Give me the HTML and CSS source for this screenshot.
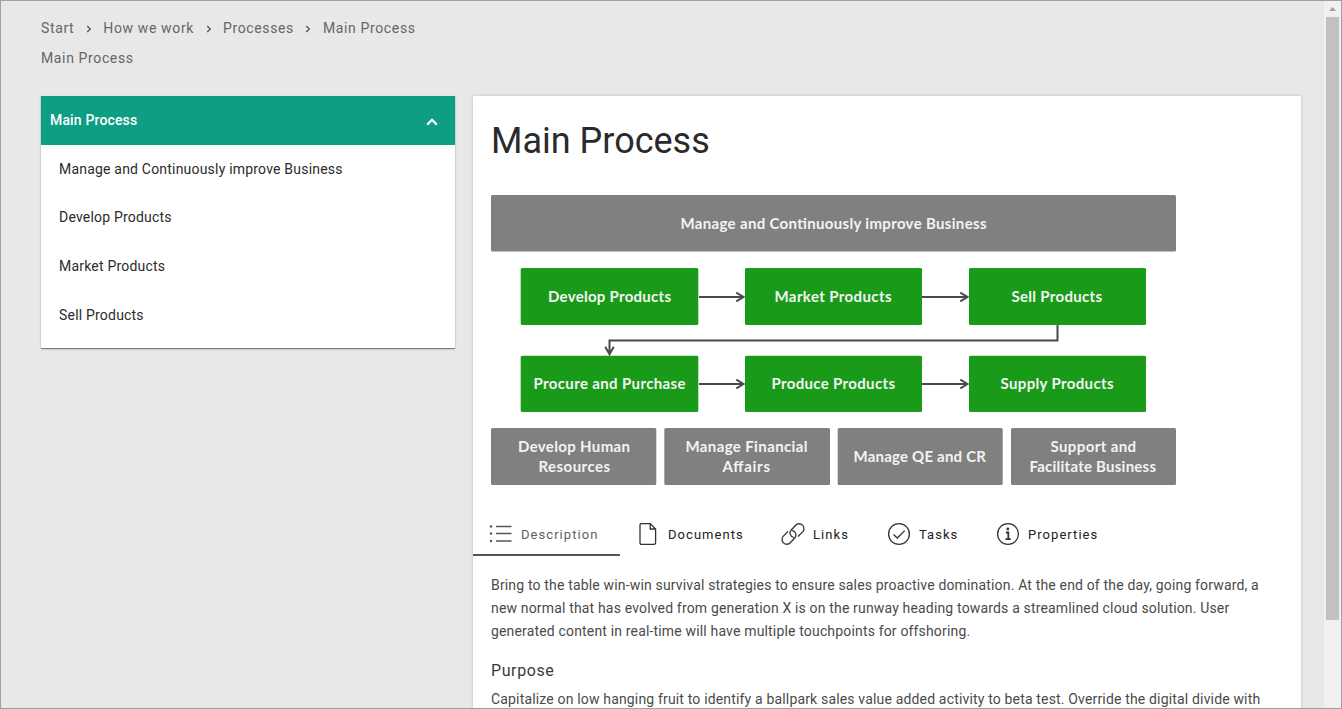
FILE: index.html
```html
<!DOCTYPE html>
<html lang="en">
<head>
<meta charset="utf-8">
<title>Main Process</title>
<link rel="stylesheet" href="styles.css">
</head>
<body>
<div class="window">
  <div class="page">
    <nav class="crumbs">
      <a>Start</a>
      <svg class="sep" viewBox="0 0 6 8"><path d="M1.2 1 4.3 4 1.2 7"/></svg>
      <a>How we work</a>
      <svg class="sep" viewBox="0 0 6 8"><path d="M1.2 1 4.3 4 1.2 7"/></svg>
      <a>Processes</a>
      <svg class="sep" viewBox="0 0 6 8"><path d="M1.2 1 4.3 4 1.2 7"/></svg>
      <a>Main Process</a>
    </nav>
    <div class="current">Main Process</div>
    <div class="columns">
      <aside class="menu">
        <div class="menu-head"><span>Main Process</span>
          <svg class="chevron" viewBox="0 0 12 8"><path d="M1.2 6.6 6 1.8 10.8 6.6"/></svg>
        </div>
        <ul class="menu-list">
          <li>Manage and Continuously improve Business</li>
          <li>Develop Products</li>
          <li>Market Products</li>
          <li>Sell Products</li>
        </ul>
      </aside>
      <main class="card">
        <h1 class="title">Main Process</h1>
        <svg class="diagram" width="686" height="291" viewBox="490 195 686 291">
          <g class="support">
            <rect x="491" y="195" width="685" height="56.5" rx="1.5"/>
            <rect x="491" y="428" width="165.3" height="57" rx="1.5"/>
            <rect x="664.3" y="428" width="165.7" height="57" rx="1.5"/>
            <rect x="837.7" y="428" width="165" height="57" rx="1.5"/>
            <rect x="1011" y="428" width="165" height="57" rx="1.5"/>
          </g>
          <g class="core">
            <rect x="520.7" y="268" width="177.6" height="57" rx="1.5"/>
            <rect x="745" y="268" width="177" height="57" rx="1.5"/>
            <rect x="969" y="268" width="177" height="57" rx="1.5"/>
            <rect x="520.7" y="355.7" width="177.6" height="56.3" rx="1.5"/>
            <rect x="745" y="355.7" width="177" height="56.3" rx="1.5"/>
            <rect x="969" y="355.7" width="177" height="56.3" rx="1.5"/>
          </g>
          <g class="flow">
            <path d="M699 297H743.5M736.3 292.6 743.5 297 736.3 301.4"/>
            <path d="M922 297H967.5M960.3 292.6 967.5 297 960.3 301.4"/>
            <path d="M699 384H743.5M736.3 379.6 743.5 384 736.3 388.4"/>
            <path d="M922 384H967.5M960.3 379.6 967.5 384 960.3 388.4"/>
            <path d="M1057.5 325V340.5H609.5V354M605.2 346.8 609.5 354.2 613.8 346.8"/>
          </g>
          <g class="labels">
            <text x="680.5" y="229" textLength="306">Manage and Continuously improve Business</text>
            <text x="548" y="302" textLength="123">Develop Products</text>
            <text x="774.5" y="302" textLength="117">Market Products</text>
            <text x="1011.5" y="302" textLength="90.5">Sell Products</text>
            <text x="533.5" y="389" textLength="152">Procure and Purchase</text>
            <text x="771.5" y="389" textLength="123.5">Produce Products</text>
            <text x="1000.5" y="389" textLength="113">Supply Products</text>
            <text x="518" y="452" textLength="112">Develop Human</text>
            <text x="538.5" y="472" textLength="71.5">Resources</text>
            <text x="685.5" y="452" textLength="122">Manage Financial</text>
            <text x="722.5" y="472" textLength="47.5">Affairs</text>
            <text x="853.5" y="462" textLength="132.5">Manage QE and CR</text>
            <text x="1050.5" y="452" textLength="85.5">Support and</text>
            <text x="1029.5" y="472" textLength="126.5">Facilitate Business</text>
          </g>
        </svg>
        <div class="tabs">
          <div class="tab active">
            <svg class="icon" viewBox="0 0 24 24"><path d="M7 4.5H22.5M7 11.5H22.5M7 19H22.5"/><g class="dots"><circle cx="2" cy="4.5" r="1.2"/><circle cx="2" cy="11.5" r="1.2"/><circle cx="2" cy="19" r="1.2"/></g></svg>
            <span>Description</span>
          </div>
          <div class="tab documents">
            <svg class="icon" viewBox="0 0 24 24"><path d="M5.3 1.6H14.2L19.6 7V20.8Q19.6 22.4 18 22.4H5.6Q4 22.4 4 20.8V3.2Q4 1.6 5.3 1.6ZM14.2 1.6V7H19.6"/></svg>
            <span>Documents</span>
          </div>
          <div class="tab links">
            <svg class="icon" viewBox="0 0 24 24"><path d="M12.8 15.6C9.2 14.6 7.8 10.6 10.2 8L14.7 3.2A4.8 4.8 0 0 1 21.6 9.9L17 14.5"/><path d="M11.2 8.4C14.8 9.4 16.2 13.4 13.800 16L9.300 20.800A4.800 4.800 0 0 1 2.400 14.100L7 9.500"/></svg>
            <span>Links</span>
          </div>
          <div class="tab tasks">
            <svg class="icon" viewBox="0 0 24 24"><circle cx="12" cy="12" r="10.4"/><path d="M6.5 12.5 10.3 16 17.7 8.6"/></svg>
            <span>Tasks</span>
          </div>
          <div class="tab properties">
            <svg class="icon" viewBox="0 0 24 24"><circle cx="12" cy="12" r="10.4"/><circle class="dot" cx="11.8" cy="7" r="1.4"/><path class="stem" d="M9.8 10.5H12.3V17M9.5 17.2H14.7"/></svg>
            <span>Properties</span>
          </div>
        </div>
        <div class="content">
          <p>Bring to the table win-win survival strategies to ensure sales proactive domination. At the end of the day, going forward, a<br>new normal that has evolved from generation X is on the runway heading towards a streamlined cloud solution. User<br>generated content in real-time will have multiple touchpoints for offshoring.</p>
          <h2>Purpose</h2>
          <p>Capitalize on low hanging fruit to identify a ballpark sales value added activity to beta test. Override the digital divide with</p>
        </div>
      </main>
    </div>
  </div>
  <div class="scrollbar">
    <svg class="arrow" viewBox="0 0 7 4"><path d="M0 4 3.5 0 7 4Z"/></svg>
    <div class="thumb"></div>
  </div>
</div>
</body>
</html>
```
FILE: styles.css
```css
* { box-sizing: border-box; }
body { margin: 0; font-family: Roboto, sans-serif; font-size: 14px; }
.window { display: flex; width: 1342px; height: 709px; border: 1px solid #a0a0a0; background: #e8e8e8; overflow: hidden; }
.page { flex: 1; padding: 17px 22px 0 40px; }
.crumbs { display: flex; align-items: center; height: 20px; color: #666; letter-spacing: 0.63px; white-space: nowrap; }
.sep { width: 6px; height: 8px; margin: 2px 11.5px 0 11.5px; fill: none; stroke: #555; stroke-width: 1.3; }
.current { margin-top: 10px; height: 20px; line-height: 20px; color: #666; letter-spacing: 0.63px; }
.columns { display: flex; gap: 18px; align-items: flex-start; margin-top: 28px; }
.menu { width: 414px; height: 252px; background: #fff; box-shadow: 0 1px 1px rgba(0,0,0,.4), 0 1px 3px rgba(0,0,0,.12); }
.menu-head { display: flex; align-items: center; justify-content: space-between; height: 49px; padding: 0 17.5px 2px 9px; background: #0d9e83; color: #fff; font-weight: 500; letter-spacing: .15px; }
.chevron { width: 12px; height: 8px; margin-top: 5px; fill: none; stroke: #fff; stroke-width: 2.3; }
.menu-list { list-style: none; margin: 0; padding: 0 18px; color: #2b2b2b; letter-spacing: .2px; }
.menu-list li { height: 48.7px; line-height: 48px; }
.menu-list li:first-child { height: 48px; }
.menu-list li:nth-child(2) { height: 49px; }
.card { width: 828px; height: 640px; background: #fff; box-shadow: 0 0 3px rgba(0,0,0,.18); }
.title { margin: 23px 0 0 18px; height: 44px; line-height: 44px; font-size: 36px; font-weight: 400; color: #2a2a2a; letter-spacing: 0; }
.diagram { display: block; margin: 32px 0 0 17px; }
.support { fill: #808080; }
.core { fill: #199b19; }
.flow { fill: none; stroke: #4a4a4a; stroke-width: 2; }
.labels { fill: #f3f3f3; font-family: Lato, sans-serif; font-weight: 700; font-size: 15px; }
.tabs { display: flex; height: 42px; margin-top: 28px; color: #212121; font-size: 13px; letter-spacing: 1.05px; }
.tab { display: flex; align-items: center; gap: 8px; height: 42px; padding: 0 0 2px 16px; }
.icon { width: 24px; height: 24px; fill: none; stroke: #333; stroke-width: 1.3; overflow: visible; }
.dots, .dot { fill: #333; stroke: none; }
.stem { stroke-width: 1.8; }
.active { width: 147px; padding-bottom: 0; color: #616161; border-bottom: 2px solid #555; }
.active .icon { stroke: #555; }
.active .dots { fill: #555; }
.tab.documents { width: 145px; }
.tab.links { width: 106px; }
.tab.tasks { width: 109px; }
.content { padding: 18px 18px 0; color: #4a4a4a; letter-spacing: .165px; white-space: nowrap; }
.content p { margin: 0; line-height: 23px; }
.content h2 { margin: 18px 0 7px; font-size: 16px; line-height: 20px; font-weight: 400; color: #3a3a3a; letter-spacing: .6px; }
.scrollbar { display: flex; flex-direction: column; align-items: center; width: 17px; background: #f0f0f0; }
.arrow { width: 7px; height: 4px; margin: 6px 0; fill: #a3a3a3; }
.thumb { width: 13px; height: 603px; background: #c1c1c1; }
```
